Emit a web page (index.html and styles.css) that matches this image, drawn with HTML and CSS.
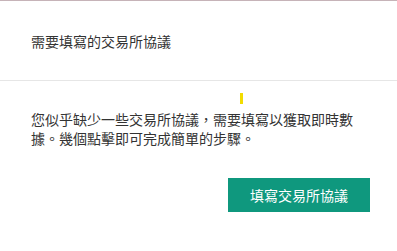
FILE: index.html
```html
<!DOCTYPE html>
<html lang="zh-Hant">
<head>
<meta charset="utf-8">
<link rel="stylesheet" href="styles.css">
</head>
<body>
<div class="dialog">
  <div class="dialog-header">
    <h2 class="dialog-title">需要填寫的交易所協議</h2>
  </div>
  <div class="dialog-body">
    <span class="caret"></span>
    <p class="dialog-text">您似乎缺少一些交易所協議，需要填寫以獲取即時數據。幾個點擊即可完成簡單的步驟。</p>
  </div>
  <div class="dialog-footer">
    <button class="btn-primary">填寫交易所協議</button>
  </div>
</div>
</body>
</html>
```

FILE: styles.css
```css
html, body {
  margin: 0;
  padding: 0;
  background: #ffffff;
}
body {
  font-family: "Noto Sans CJK TC", "Liberation Sans", sans-serif;
  color: #333333;
  width: 397px;
  height: 251px;
  overflow: hidden;
}
.dialog {
  border-top: 1px solid #c6b3b8;
  height: 250px;
  display: flex;
  flex-direction: column;
}
.dialog-header {
  padding: 30px 31px 29px;
  border-bottom: 1px solid #e6e6e6;
}
.dialog-title {
  margin: 0;
  font-size: 14px;
  font-weight: normal;
  line-height: 20px;
  color: #333333;
}
.dialog-body {
  position: relative;
  padding: 29px 31px 0;
}
.caret {
  position: absolute;
  left: 240px;
  top: 12px;
  width: 3px;
  height: 11px;
  background: #f2dc00;
}
.dialog-text {
  margin: 0;
  font-size: 14px;
  line-height: 19px;
  width: 325px;
}
.dialog-footer {
  display: flex;
  justify-content: flex-end;
  padding: 30px 27px 0;
}
.btn-primary {
  font-family: inherit;
  font-size: 14px;
  color: #ffffff;
  background: #0f987e;
  border: none;
  height: 34px;
  width: 142px;
  padding: 0;
  line-height: 34px;
}
```
